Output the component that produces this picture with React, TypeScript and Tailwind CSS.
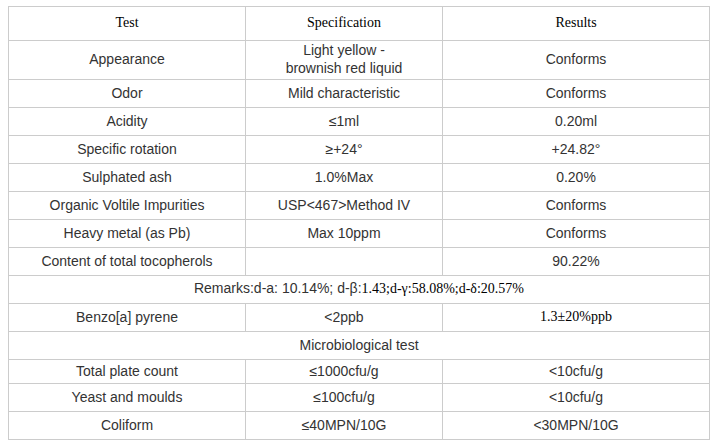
const arial = "font-['Liberation_Sans',Arial,sans-serif]";
const times = "font-['Liberation_Serif','Times_New_Roman',serif]";

type Row = { test: string; spec: React.ReactNode; result: React.ReactNode; h: string };

const rows: Row[] = [
  {
    test: "Appearance",
    spec: (
      <>
        Light yellow -
        <br />
        brownish red liquid
      </>
    ),
    result: "Conforms",
    h: "h-[39px]",
  },
  { test: "Odor", spec: "Mild characteristic", result: "Conforms", h: "h-[28px]" },
  { test: "Acidity", spec: "≤1ml", result: "0.20ml", h: "h-[28px]" },
  { test: "Specific rotation", spec: "≥+24°", result: "+24.82°", h: "h-[28px]" },
  { test: "Sulphated ash", spec: "1.0%Max", result: "0.20%", h: "h-[28px]" },
  { test: "Organic Voltile Impurities", spec: "USP<467>Method IV", result: "Conforms", h: "h-[28px]" },
  { test: "Heavy metal (as Pb)", spec: "Max 10ppm", result: "Conforms", h: "h-[28px]" },
  { test: "Content of total tocopherols", spec: "", result: "90.22%", h: "h-[28px]" },
];

const micro: Row[] = [
  { test: "Total plate count", spec: "≤1000cfu/g", result: "<10cfu/g", h: "h-[24px]" },
  { test: "Yeast and moulds", spec: "≤100cfu/g", result: "<10cfu/g", h: "h-[28px]" },
  { test: "Coliform", spec: "≤40MPN/10G", result: "<30MPN/10G", h: "h-[28px]" },
];

const cell = "border border-[#cccccc] text-center align-middle p-0 pb-[2px] leading-[18px]";

function DataRow({ r }: { r: Row }) {
  return (
    <tr className={r.h}>
      <td className={cell}>{r.test}</td>
      <td className={cell}>{r.spec}</td>
      <td className={cell}>{r.result}</td>
    </tr>
  );
}

export default function App() {
  return (
    <div className="w-[724px] h-[445px] bg-white pt-[6px] pl-[8px]">
      <table className={`${arial} border-collapse w-[701px] text-[14px] text-[#333333] table-fixed`}>
        <colgroup>
          <col className="w-[237px]" />
          <col className="w-[197px]" />
          <col className="w-[267px]" />
        </colgroup>
        <tbody>
          <tr className="h-[34px]">
            <td className={`${cell} ${times} text-black`}>Test</td>
            <td className={`${cell} ${times} text-black`}>Specification</td>
            <td className={`${cell} ${times} text-black`}>Results</td>
          </tr>
          {rows.map((r) => (
            <DataRow key={r.test} r={r} />
          ))}
          <tr className="h-[28px]">
            <td colSpan={3} className={cell}>
              Remarks:d-a: 10.14%; d-β:<span className={`${times} text-black`}>1.43;d-γ:58.08%;d-δ:20.57%</span>
            </td>
          </tr>
          <tr className="h-[28px]">
            <td className={cell}>Benzo[a] pyrene</td>
            <td className={cell}>&lt;2ppb</td>
            <td className={`${cell} ${times} text-black`}>1.3±20%ppb</td>
          </tr>
          <tr className="h-[28px]">
            <td colSpan={3} className={cell}>
              Microbiological test
            </td>
          </tr>
          {micro.map((r) => (
            <DataRow key={r.test} r={r} />
          ))}
        </tbody>
      </table>
    </div>
  );
}
